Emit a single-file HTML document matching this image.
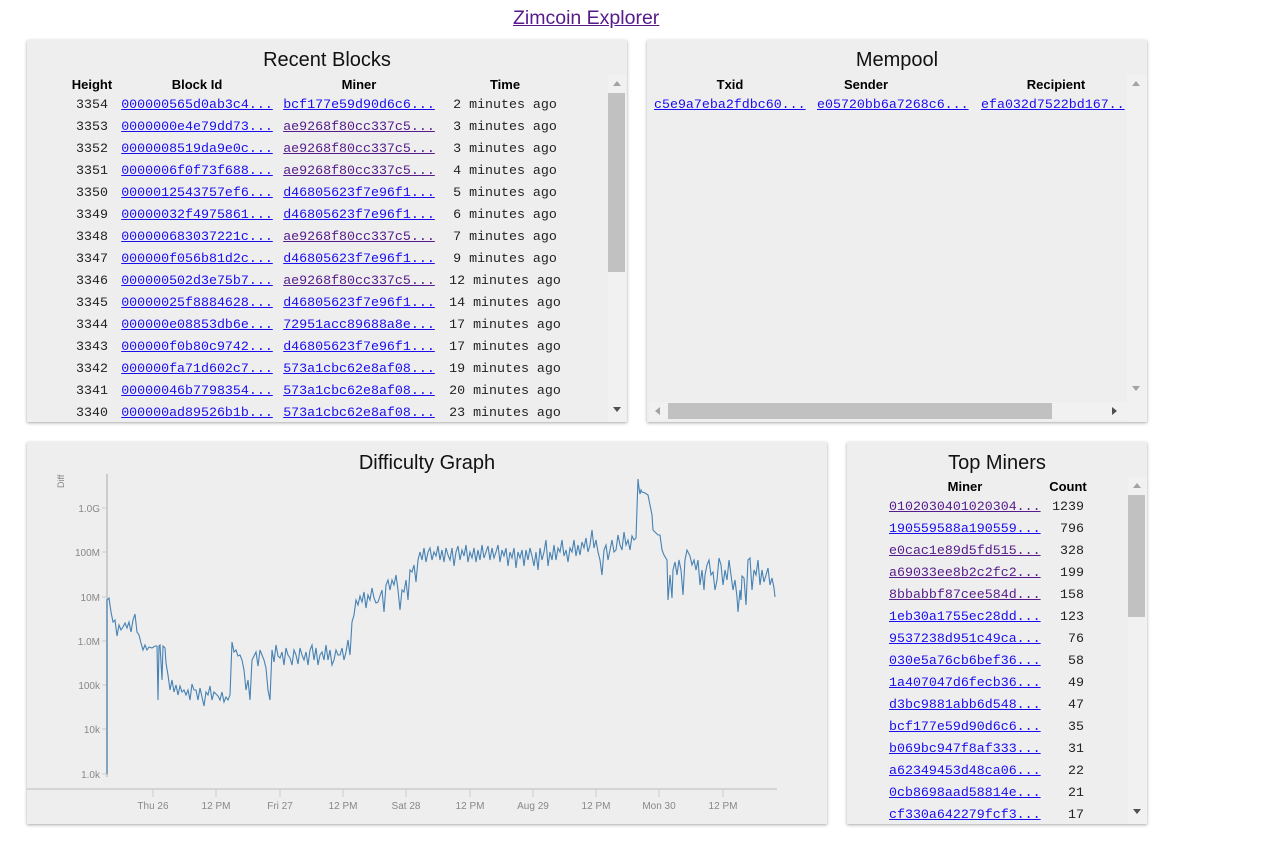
<!DOCTYPE html>
<html><head><meta charset="utf-8"><style>
body{margin:0;width:1264px;height:859px;background:#fff;position:relative;font-family:"Liberation Sans",sans-serif;overflow:hidden}
.p{position:absolute;background:#eee;box-shadow:0 1px 3px rgba(0,0,0,.35);}
.t{position:absolute;font-size:20px;color:#111;text-align:center;left:0;right:0}
.h{position:absolute;font-weight:bold;font-size:13px;text-align:center;color:#000}
.c{position:absolute;font-family:"Liberation Mono",monospace;font-size:13.3px;text-align:center;white-space:nowrap;color:#222;line-height:22px;height:22px}
.c a{color:#1a0dee;text-decoration:underline}
.c a.v{color:#551a8b}
.sb{position:absolute;background:#f1f1f1}
.th{position:absolute;background:#c1c1c1}
.ar{position:absolute;width:0;height:0;border-left:4px solid transparent;border-right:4px solid transparent}
.up{border-bottom:5px solid #a3a3a3}.dn{border-top:5px solid #505050}
.ax{font-size:10px;fill:#888;font-family:"Liberation Sans",sans-serif}
</style></head><body>
<a href="#" style="position:absolute;left:513px;top:7px;font-size:19.5px;color:#551a8b">Zimcoin Explorer</a>

<div class="p" style="left:27px;top:40px;width:600px;height:382px;overflow:hidden">
<div class="t" style="top:9px">Recent Blocks</div>
<div class="sb" style="left:581px;top:35px;width:18px;height:347px"></div>
<div class="th" style="left:581px;top:53px;width:17px;height:179px"></div>
<div class="ar up" style="left:586px;top:41px"></div>
<div class="ar dn" style="left:586px;top:367px"></div>
</div>
<div class="h" style="left:62px;top:77px;width:60px">Height</div>
<div class="h" style="left:118px;top:77px;width:158px">Block Id</div>
<div class="h" style="left:280px;top:77px;width:158px">Miner</div>
<div class="h" style="left:445px;top:77px;width:120px">Time</div>
<div id="rb"></div>

<div class="p" style="left:647px;top:40px;width:500px;height:382px;overflow:hidden">
<div class="t" style="top:9px">Mempool</div>
<div class="sb" style="left:480px;top:35px;width:20px;height:347px"></div>
<div class="sb" style="left:2px;top:362px;width:478px;height:18px"></div>
<div class="th" style="left:21px;top:363px;width:384px;height:16px"></div>
<div class="ar up" style="left:485px;top:41px"></div>
<div class="ar dn" style="left:485px;top:346px;border-top-color:#a3a3a3"></div>
<div class="ar" style="left:8px;top:367px;border:4px solid transparent;border-right:5px solid #a3a3a3;border-left:0"></div>
<div class="ar" style="left:465px;top:367px;border:4px solid transparent;border-left:5px solid #505050;border-right:0"></div>
</div>
<div class="h" style="left:690px;top:77px;width:80px">Txid</div>
<div class="h" style="left:826px;top:77px;width:80px">Sender</div>
<div class="h" style="left:1016px;top:77px;width:80px">Recipient</div>
<div class="c" style="left:654px;top:94px;text-align:left"><a href="#">c5e9a7eba2fdbc60...</a></div>
<div class="c" style="left:817px;top:94px;text-align:left"><a href="#">e05720bb6a7268c6...</a></div>
<div class="c" style="left:981px;top:94px;width:145px;overflow:hidden;text-align:left"><a href="#">efa032d7522bd167..</a></div>

<div class="p" style="left:27px;top:442px;width:800px;height:382px;overflow:hidden">
<div class="t" style="top:10px">Difficulty Graph</div>
<svg width="800" height="382" style="position:absolute;left:0;top:0">
<g transform="translate(-27,-442)">
<text class="ax" transform="translate(64,488) rotate(-90)" style="font-size:9px">Diff</text>
<line x1="107" y1="474" x2="107" y2="777" stroke="#ccc" stroke-width="2"/>
<g stroke="#ccc" stroke-width="1">
<line x1="102" y1="508" x2="107" y2="508"/><line x1="102" y1="552" x2="107" y2="552"/><line x1="102" y1="597" x2="107" y2="597"/><line x1="102" y1="641" x2="107" y2="641"/><line x1="102" y1="685" x2="107" y2="685"/><line x1="102" y1="729" x2="107" y2="729"/><line x1="102" y1="774" x2="107" y2="774"/>
</g>
<g class="ax" text-anchor="end">
<text x="100" y="512">1.0G</text><text x="100" y="556">100M</text><text x="100" y="601">10M</text><text x="100" y="645">1.0M</text><text x="100" y="689">100k</text><text x="100" y="733">10k</text><text x="100" y="778">1.0k</text>
</g>
<line x1="27" y1="789" x2="777" y2="789" stroke="#ccc" stroke-width="1.5"/>
<g stroke="#ccc"><line x1="153" y1="789" x2="153" y2="797"/><line x1="216" y1="789" x2="216" y2="797"/><line x1="280" y1="789" x2="280" y2="797"/><line x1="343" y1="789" x2="343" y2="797"/><line x1="406" y1="789" x2="406" y2="797"/><line x1="470" y1="789" x2="470" y2="797"/><line x1="533" y1="789" x2="533" y2="797"/><line x1="596" y1="789" x2="596" y2="797"/><line x1="659" y1="789" x2="659" y2="797"/><line x1="723" y1="789" x2="723" y2="797"/></g>
<g class="ax" text-anchor="middle">
<text x="153" y="809">Thu 26</text><text x="216" y="809">12 PM</text><text x="280" y="809">Fri 27</text><text x="343" y="809">12 PM</text><text x="406" y="809">Sat 28</text><text x="470" y="809">12 PM</text><text x="533" y="809">Aug 29</text><text x="596" y="809">12 PM</text><text x="659" y="809">Mon 30</text><text x="723" y="809">12 PM</text>
</g>
<polyline fill="none" stroke="#4682b4" stroke-width="1.1" points="107,774 107,600 109,598 111,612 113,622 115,620 117,636 119,625 121,630 123,627 125,623 127,628 129,622 131,632 133,620 135,614 137,632 139,635 141,643 143,650 145,645 147,650 149,647 152,648 155,646 157,646 158,700 159,646 160,645 162,680 163,646 165,648 166,663 168,675 170,690 172,680 174,692 176,685 178,695 180,686 182,692 184,690 186,695 188,690 190,700 192,684 194,690 196,690 198,700 200,688 202,697 204,706 206,692 208,695 210,686 212,700 214,692 216,694 218,696 220,700 222,692 224,702 226,697 228,700 230,695 232,642 234,652 236,650 238,656 240,655 242,660 244,670 246,690 248,680 250,700 252,660 254,656 256,652 258,666 260,650 262,655 264,660 266,668 268,690 270,700 272,650 274,662 276,645 278,656 280,658 282,652 284,665 286,648 288,655 290,658 292,665 294,650 296,655 298,664 300,648 302,655 304,660 306,652 308,665 310,650 312,645 314,660 316,648 318,665 320,655 322,652 324,660 326,645 328,660 330,650 332,665 334,660 336,650 338,655 340,655 342,648 344,660 346,652 348,640 350,655 352,622 354,615 356,600 358,605 360,596 362,602 364,592 366,608 368,595 370,600 372,588 374,598 376,603 378,602 380,596 382,590 384,612 386,585 388,580 390,590 392,580 394,585 396,575 398,590 400,610 402,590 404,592 406,580 408,600 410,570 412,572 414,565 416,582 418,560 420,552 422,560 424,548 426,562 428,552 430,548 432,560 434,552 436,556 438,546 440,560 442,550 444,562 446,548 448,555 450,560 452,548 454,566 456,552 458,546 460,560 462,550 464,556 466,545 468,562 470,552 472,558 474,548 476,562 478,550 480,560 482,545 484,558 486,552 488,546 490,560 492,548 494,558 496,552 498,545 500,562 502,550 504,556 506,548 508,566 510,552 512,558 514,548 516,568 518,552 520,558 522,550 524,566 526,550 528,560 530,548 532,556 534,566 536,552 538,570 540,548 542,560 544,552 546,540 548,566 550,552 552,560 554,545 556,560 558,548 560,552 562,540 564,556 566,550 568,562 570,548 572,552 574,540 576,556 578,545 580,555 582,542 584,548 586,538 588,552 590,545 592,530 594,548 596,540 598,552 600,560 602,575 604,550 606,545 608,560 610,550 612,540 614,552 616,550 618,535 620,545 622,550 624,532 626,545 628,540 630,550 632,536 634,540 636,538 638,479 639,488 640,494 641,490 642,492 645,493 648,495 650,505 652,515 653,530 655,532 658,535 660,535 662,550 664,555 667,560 668,600 670,575 672,598 673,570 675,562 677,575 679,560 681,570 683,595 685,560 687,550 690,556 692,565 694,560 696,570 698,560 700,585 702,570 704,590 705,575 707,565 709,560 711,575 713,572 715,590 717,580 719,558 721,565 723,585 725,570 727,580 729,560 731,575 733,590 735,580 737,597 738,612 740,590 741,600 742,576 744,578 746,605 748,560 750,558 752,590 754,570 756,575 758,560 760,585 762,570 764,582 766,575 768,568 770,585 772,578 774,588 775,597"/>
</g></svg>
</div>

<div class="p" style="left:847px;top:442px;width:300px;height:382px;overflow:hidden">
<div class="t" style="top:10px">Top Miners</div>
<div class="sb" style="left:281px;top:35px;width:19px;height:347px"></div>
<div class="th" style="left:281px;top:53px;width:17px;height:122px"></div>
<div class="ar up" style="left:286px;top:41px"></div>
<div class="ar dn" style="left:286px;top:367px"></div>
</div>
<div class="h" style="left:925px;top:479px;width:80px">Miner</div>
<div class="h" style="left:1043px;top:479px;width:50px">Count</div>
<div id="tm"></div>

<script>
var rb=[["3354","000000565d0ab3c4...","bcf177e59d90d6c6...",0,"2 minutes ago"],["3353","0000000e4e79dd73...","ae9268f80cc337c5...",1,"3 minutes ago"],["3352","0000008519da9e0c...","ae9268f80cc337c5...",1,"3 minutes ago"],["3351","0000006f0f73f688...","ae9268f80cc337c5...",1,"4 minutes ago"],["3350","0000012543757ef6...","d46805623f7e96f1...",0,"5 minutes ago"],["3349","00000032f4975861...","d46805623f7e96f1...",0,"6 minutes ago"],["3348","000000683037221c...","ae9268f80cc337c5...",1,"7 minutes ago"],["3347","000000f056b81d2c...","d46805623f7e96f1...",0,"9 minutes ago"],["3346","000000502d3e75b7...","ae9268f80cc337c5...",1,"12 minutes ago"],["3345","00000025f8884628...","d46805623f7e96f1...",0,"14 minutes ago"],["3344","000000e08853db6e...","72951acc89688a8e...",0,"17 minutes ago"],["3343","000000f0b80c9742...","d46805623f7e96f1...",0,"17 minutes ago"],["3342","000000fa71d602c7...","573a1cbc62e8af08...",0,"19 minutes ago"],["3341","00000046b7798354...","573a1cbc62e8af08...",0,"20 minutes ago"],["3340","000000ad89526b1b...","573a1cbc62e8af08...",0,"23 minutes ago"]];
var h="";rb.forEach(function(r,i){var y=94+i*22;
h+='<div class="c" style="left:62px;top:'+y+'px;width:60px">'+r[0]+'</div><div class="c" style="left:118px;top:'+y+'px;width:158px"><a href="#">'+r[1]+'</a></div><div class="c" style="left:280px;top:'+y+'px;width:158px"><a href="#"'+(r[3]?' class="v"':'')+'>'+r[2]+'</a></div><div class="c" style="left:445px;top:'+y+'px;width:120px">'+r[4]+'</div>';});
document.getElementById("rb").innerHTML=h;
var tm=[["0102030401020304...",1239,1],["190559588a190559...",796,0],["e0cac1e89d5fd515...",328,1],["a69033ee8b2c2fc2...",199,1],["8bbabbf87cee584d...",158,1],["1eb30a1755ec28dd...",123,0],["9537238d951c49ca...",76,0],["030e5a76cb6bef36...",58,0],["1a407047d6fecb36...",49,0],["d3bc9881abb6d548...",47,0],["bcf177e59d90d6c6...",35,0],["b069bc947f8af333...",31,0],["a62349453d48ca06...",22,0],["0cb8698aad58814e...",21,0],["cf330a642279fcf3...",17,0]];
h="";tm.forEach(function(r,i){var y=496+i*22;
h+='<div class="c" style="left:889px;top:'+y+'px;text-align:left"><a href="#"'+(r[2]?' class="v"':'')+'>'+r[0]+'</a></div><div class="c" style="left:1033px;top:'+y+'px;width:51px;text-align:right">'+r[1]+'</div>';});
document.getElementById("tm").innerHTML=h;
</script>
</body></html>
